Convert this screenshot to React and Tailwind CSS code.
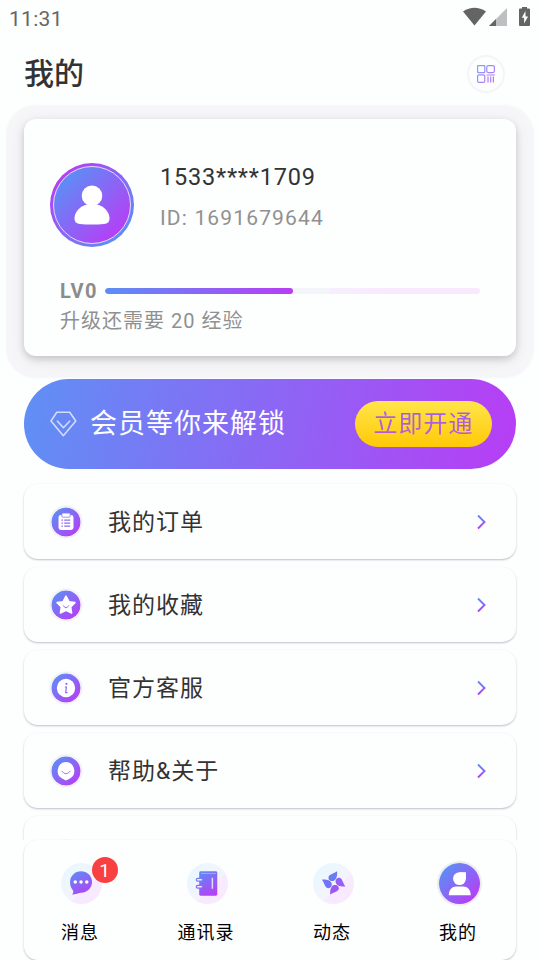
const menu = [
  { id: 'orders', label: '我的订单', Icon: OrderGlyph },
  { id: 'favorites', label: '我的收藏', Icon: StarGlyph },
  { id: 'service', label: '官方客服', Icon: InfoGlyph },
  { id: 'help', label: '帮助&关于', Icon: HelpGlyph },
];

const tabs = [
  { id: 'messages', label: '消息', Icon: ChatIcon, badge: 1 },
  { id: 'contacts', label: '通讯录', Icon: ContactsIcon },
  { id: 'moments', label: '动态', Icon: MomentsIcon },
  { id: 'mine', label: '我的', Icon: MineIcon, active: true },
];

// one petal, rotated around the hub of the pinwheel
const petals = [
  { angle: 0, fill: '#6a7cf5' },
  { angle: 90, fill: '#975ff5' },
  { angle: 180, fill: '#9f56f5' },
  { angle: 270, fill: '#7374f5' },
];

// shared gradients, referenced by id from every icon
function Gradients() {
  return (
    <svg className="absolute h-0 w-0">
      <defs>
        <linearGradient id="brand" x1="0" y1="0" x2="1" y2="1">
          <stop offset="0.08" stopColor="#5b8ff5" />
          <stop offset="0.92" stopColor="#b83df5" />
        </linearGradient>
        <linearGradient id="brandDown" gradientUnits="userSpaceOnUse" x1="0" y1="1" x2="0" y2="15">
          <stop offset="0" stopColor="#5b8ff5" />
          <stop offset="1" stopColor="#b83df5" />
        </linearGradient>
        <linearGradient id="glyph" gradientUnits="userSpaceOnUse" x1="12" y1="8" x2="26" y2="34">
          <stop offset="0" stopColor="#5b8ff5" />
          <stop offset="1" stopColor="#b83df5" />
        </linearGradient>
        <linearGradient id="qr" gradientUnits="userSpaceOnUse" x1="0" y1="0" x2="18" y2="18">
          <stop offset="0" stopColor="#7fa5f7" />
          <stop offset="1" stopColor="#c56af5" />
        </linearGradient>
      </defs>
    </svg>
  );
}

function OrderGlyph() {
  return (
    <>
      <rect x="6.5" y="7" width="15" height="15" rx="2.4" fill="white" />
      <rect x="9.8" y="5" width="8.4" height="4.2" rx="1" fill="white" stroke="#7f78f4" strokeWidth="0.8" />
      <path d="M9.5 12.2h1.4M9.5 15.2h1.4M9.5 18.2h1.4M12.2 12.2h6M12.2 15.2h6M12.2 18.2h6" stroke="#8b6cf3" strokeWidth="1.2" />
    </>
  );
}

function StarGlyph() {
  return (
    <>
      <path d="M14 5.1l2.9 5.6 6 .9-4.3 4.3 1 6.1-5.6-2.8-5.6 2.8 1-6.1-4.3-4.3 6-.9z" fill="white" stroke="white" strokeWidth="1.6" strokeLinejoin="round" />
      <path d="M11.3 14.5q2.7 4.6 5.4 0" fill="none" stroke="#8b6cf3" strokeWidth="1" />
    </>
  );
}

function InfoGlyph() {
  return (
    <>
      <circle cx="14" cy="14" r="9.2" fill="white" />
      <circle cx="14.4" cy="9.8" r="1.1" fill="#8b6cf3" />
      <path d="M12.8 13h1.6l-.7 5.6h1.8" fill="none" stroke="#8b6cf3" strokeWidth="1.2" />
    </>
  );
}

function HelpGlyph() {
  return (
    <>
      <path d="M14 5a8.9 8.9 0 0 1 3.5 16.8L14 23.6l-3.5-1.8A8.9 8.9 0 0 1 14 5z" fill="white" />
      <path d="M9.6 13.8q4.4 6 8.8 0" fill="none" stroke="#9a7cf3" strokeWidth="1" />
    </>
  );
}

function ChatIcon() {
  return (
    <>
      <path d="M20.5 8.5c6.1 0 11.3 4.8 11.3 10.7 0 6.2-4.9 11-11 11.2-2.9 0-5.3 1.9-9.5 1.9 1.7-1.7 1.7-3.1.5-4.9-1.8-2.1-2.5-4.9-2.5-7.9 0-6 5-11 11.2-11z" fill="url(#glyph)" />
      <circle cx="14.6" cy="19.5" r="1.8" fill="white" />
      <circle cx="20.5" cy="19.5" r="1.8" fill="white" />
      <circle cx="26.4" cy="19.5" r="1.8" fill="white" />
    </>
  );
}

function ContactsIcon() {
  return (
    <>
      <rect x="12.5" y="8.5" width="18.5" height="25" rx="1.5" fill="url(#glyph)" />
      <path d="M14.5 10.7h15" stroke="#a9a8fa" strokeWidth="1" />
      <path d="M26 15v11.5" stroke="#e6d9fd" strokeWidth="1.5" />
      <rect x="9.5" y="15.7" width="6.5" height="2.8" rx="1.4" fill="#e8ebfe" stroke="#7481f5" strokeWidth="1.2" />
      <rect x="9.5" y="22.9" width="6.5" height="2.8" rx="1.4" fill="#efe6fe" stroke="#8b6cf3" strokeWidth="1.2" />
    </>
  );
}

function MomentsIcon() {
  return petals.map(p => (
    <path
      key={p.angle}
      d="M24.6 8.5C25.200 12 24.400 17.200 20.900 18.400 17.800 19.200 15.200 16.900 16 14 17.100 11.400 21.500 11 24.600 8.500z"
      fill={p.fill}
      transform={`rotate(${p.angle} 21.200 20.500)`}
    />
  ));
}

function MineIcon() {
  return (
    <>
      <circle cx="21" cy="16" r="6.6" fill="white" />
      <rect x="21" y="9.4" width="6.6" height="6.6" fill="white" />
      <path d="M10 33c0-5.700 3.600-9 7.500-9H25c3.900 0 7.500 3.300 7.500 9z" fill="white" />
    </>
  );
}

function StatusBar() {
  return (
    <div className="flex h-9 shrink-0 items-center justify-between pl-[9px] pr-[9px]">
      <span className="pt-0.5 text-[21px] leading-9 tracking-[0.3px] text-[#666]">11:31</span>
      <svg width="68" height="20" viewBox="0 0 68 20" className="mb-[2px]">
        <path d="M0 4.5Q11.5-3 23 4.5L11.5 18.5z" fill="#646464" />
        <path d="M26 19L44 1v18z" fill="#bfbfc1" />
        <path d="M26 19l7-7v7z" fill="#646464" />
        <path d="M59 0h5v1.5H66a1 1 0 0 1 1 1V18a1 1 0 0 1-1 1h-9a1 1 0 0 1-1-1V2.5a1 1 0 0 1 1-1h2z" fill="#646464" />
        <path d="M62.5 4l-3.7 6.7h2.3V16.5l4-7.1h-2.6z" fill="white" />
      </svg>
    </div>
  );
}

function Header() {
  return (
    <div className="flex h-[75px] shrink-0 items-center justify-between pl-6 pr-[35px]">
      <h1 className="text-[30px] font-medium leading-[75px] text-[#333]">我的</h1>
      <button className="flex h-[38px] w-[38px] items-center justify-center rounded-full border-2 border-[#f4f4f9]">
        <svg width="18" height="18" viewBox="0 0 18 18" fill="none" stroke="url(#qr)" strokeWidth="1.2">
          <rect x="0.6" y="0.6" width="7.2" height="7" rx="0.5" />
          <rect x="9.8" y="0.6" width="7.6" height="7" rx="1.5" />
          <rect x="0.6" y="9.8" width="7.2" height="7.6" rx="1.5" />
          <path d="M9.5 10H17.9M11 11.5v6M13.7 11.5v6M16.4 11.5v6" />
        </svg>
      </button>
    </div>
  );
}

function ProfileCard() {
  return (
    <section className="h-[237px] shrink-0 rounded-xl bg-[#fdfefe] px-[26px] pt-11 shadow-[0_3px_7px_rgba(0,0,0,0.16),0_4px_16px_rgba(0,0,0,0.07),0_4px_2px_18px_#f6f6f9]">
      <div className="flex">
        <div className="h-[84px] w-[84px] rounded-full bg-[linear-gradient(135deg,#b83df5_12%,#5b8ff5_88%)] p-[3px]">
          <div className="flex h-full w-full items-center justify-center rounded-full border border-[#e3dbfb] bg-[linear-gradient(135deg,#5b8ff5_12%,#b83df5_88%)]">
            <svg width="36" height="40" viewBox="0 0 36 40" fill="white">
              <circle cx="18" cy="10.8" r="10.3" />
              <path d="M12.5 19.5h11C30 21.5 35.5 27 35.5 33.5c0 3.5-2 5-5.5 5.5q-12 1-24 0c-3.5-.5-5.5-2-5.5-5.5 0-6.5 5.5-12 12-14z" />
            </svg>
          </div>
        </div>
        <div className="pl-[26px]">
          <p className="text-[23.5px] leading-7 tracking-[0.8px] text-[#333]">1533****1709</p>
          <p className="mt-[13px] text-[21px] leading-7 tracking-[1.15px] text-[#909090]">ID: 1691679644</p>
        </div>
      </div>
      <div className="mt-[31px] flex items-center pl-2.5 pr-2.5">
        <span className="w-[45px] text-[20px] font-bold leading-[26px] tracking-[1.5px] text-[#8c8c8c]">LV0</span>
        <div className="h-1.5 flex-1 overflow-hidden rounded-full bg-[linear-gradient(90deg,#f4f5fa_60%,#f6effd_60%,#f9e9fd_75%)]">
          <div className="h-full w-1/2 rounded-full bg-[linear-gradient(90deg,#5b8ff5,#b83df5)]" />
        </div>
      </div>
      <p className="mt-[3px] pl-2.5 text-[20px] leading-7 tracking-[1px] text-[#909090]">升级还需要 20 经验</p>
    </section>
  );
}

function VipBanner() {
  return (
    <section className="mt-[23px] flex h-[90px] shrink-0 items-center rounded-full bg-[linear-gradient(100deg,#5f90f4,#b83df5)] pl-[26px] pr-6">
      <svg width="27" height="26" viewBox="0 0 27 26" fill="none" stroke="#d3dcfc" strokeWidth="1.6" strokeLinejoin="round" strokeLinecap="round">
        <path d="M6.8 1.2h12.9l6.1 8.8L13.3 24.7 1 10z" />
        <path d="M7.5 10.2l5.9 6.5 6.2-6.5" />
      </svg>
      <span className="pl-[13px] text-[27px] leading-[90px] tracking-[1px] text-white">会员等你来解锁</span>
      <button className="ml-auto h-[46px] w-[137px] rounded-full bg-[linear-gradient(180deg,#ffe54a,#ffc907)]">
        <span className="bg-[linear-gradient(180deg,#9b62ee,#bb59d4)] bg-clip-text text-[24px] leading-[46px] tracking-[1px] text-transparent">立即开通</span>
      </button>
    </section>
  );
}

function MenuRow({ item }) {
  return (
    <div className="flex h-[75px] shrink-0 items-center rounded-[14px] bg-[#fdfefe] pl-[27px] pr-[30px] shadow-[0_1px_2px_rgba(50,50,80,0.3)]">
      {item ? (
        <>
          <svg width="30" height="30" viewBox="-1 -1 30 30" className="rounded-full shadow-[0_0_2px_1px_#e8e8ee]">
            <circle cx="14" cy="14" r="14.5" fill="url(#brand)" />
            <item.Icon />
          </svg>
          <span className="flex-1 pl-[27px] pt-0.5 text-[23px] leading-[73px] tracking-[1px] text-[#333]">{item.label}</span>
          <svg width="9" height="16" viewBox="0 0 9 16" fill="none">
            <path d="M1 1.5L7.5 8 1 14.5" stroke="url(#brandDown)" strokeWidth="1.9" />
          </svg>
        </>
      ) : (
        <div className="mt-1 h-[30px] w-[30px] rounded-full bg-[#ededf1] shadow-[0_0_2px_1px_#e8e8ee]" />
      )}
    </div>
  );
}

function TabBar() {
  return (
    <nav className="relative mx-6 flex h-[120px] shrink-0 justify-between rounded-[14px] bg-[#fdfefe] pl-[20px] pr-[20px] shadow-[0_1px_2px_rgba(50,50,80,0.3)]">
      {tabs.map(({ id, label, Icon, badge, active }) => (
        <div key={id} className="flex w-[74px] flex-col items-center pt-[23px]">
          <div className="relative h-[41px] w-[41px]">
            <svg
              width="41"
              height="41"
              viewBox="0 0 42 42"
              className={active
                ? 'rounded-full bg-[linear-gradient(135deg,#5b8ff5_12%,#b83df5_88%)] shadow-[0_0_1px_2px_#ebebf0]'
                : 'rounded-full bg-[linear-gradient(135deg,#e9f7ff_15%,#f4f4fb_58%,#f8ebfe_60%,#f9e8fe)]'}
            >
              <Icon />
            </svg>
            {badge && (
              <span className="absolute -top-[6px] left-[31px] h-[26px] w-[26px] rounded-full bg-[#f94040] text-center text-[19px] leading-[28px] text-white">{badge}</span>
            )}
          </div>
          <span className="mt-[15px] -ml-[2px] whitespace-nowrap text-[18px] leading-7 tracking-[1px] text-black">{label}</span>
        </div>
      ))}
    </nav>
  );
}

export default function App() {
  return (
    <div className="flex h-[960px] w-[540px] flex-col overflow-hidden bg-[#fdfefe] font-['Roboto','Noto_Sans_CJK_SC',sans-serif]">
      <Gradients />
      <StatusBar />
      <main className="flex min-h-0 flex-1 flex-col overflow-hidden">
        <Header />
        <div className="flex min-h-0 flex-1 flex-col px-6 pt-2">
          <ProfileCard />
          <VipBanner />
          <div className="mt-[15px] flex flex-col gap-2">
            {menu.map(item => (
              <MenuRow key={item.id} item={item} />
            ))}
            <MenuRow />
          </div>
        </div>
      </main>
      <TabBar />
    </div>
  );
}
